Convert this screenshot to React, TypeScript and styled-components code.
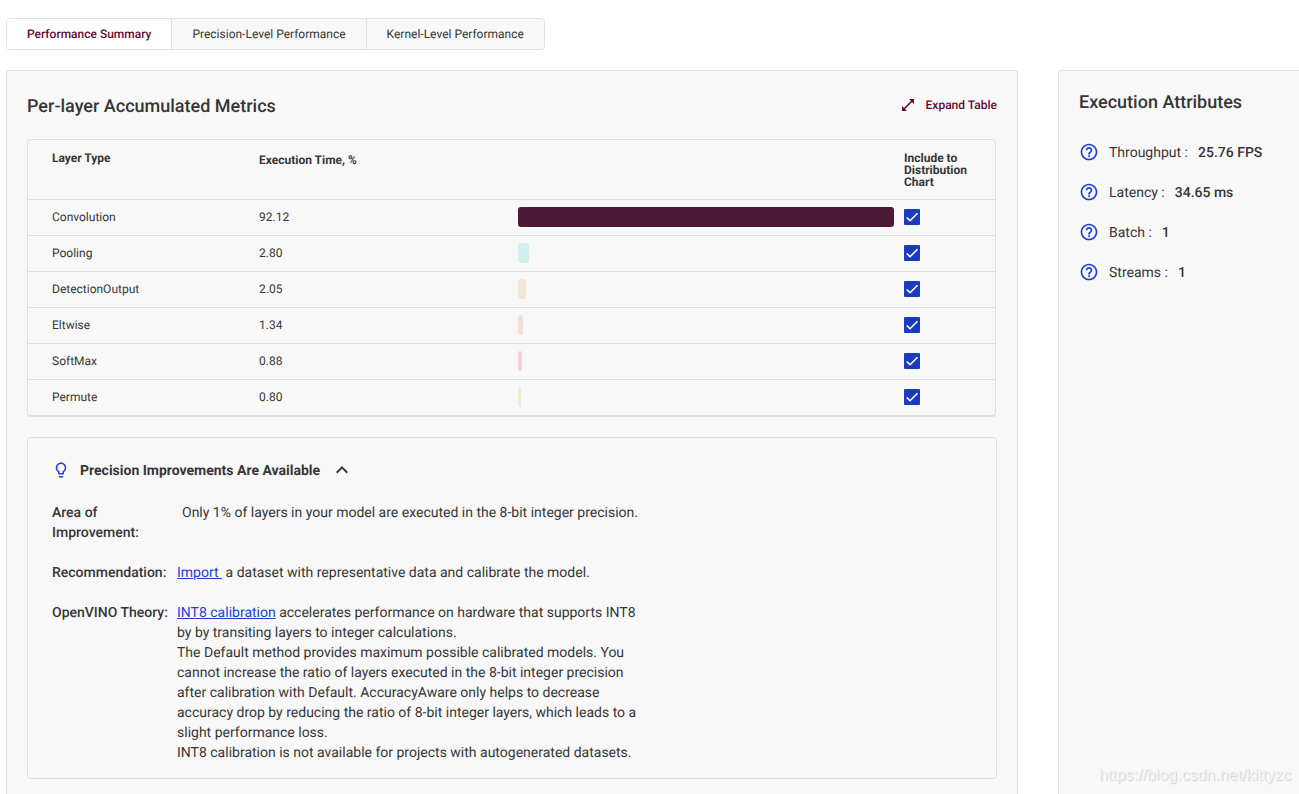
import React from "react";
import styled, { createGlobalStyle } from "styled-components";
import { MdExpandLess, MdHelpOutline, MdLightbulbOutline } from "react-icons/md";

const BORDER = "#e0e0e0";
const SURFACE = "#f8f8f8";
const TEXT = "#363636";
const WINE = "#650933";
const BLUE = "#1a3bc1";
const BRIGHT_BLUE = "#1c3fd6";

const GlobalStyle = createGlobalStyle`
  *, *::before, *::after { box-sizing: border-box; }
  body {
    margin: 0;
    background: #fff;
    color: ${TEXT};
    font: 400 14px/20px Roboto, sans-serif;
    text-rendering: geometricPrecision;
  }
  button { font-family: inherit; text-rendering: inherit; cursor: pointer; }
`;

const Page = styled.div`
  display: flex;
  flex-direction: column;
  gap: 20px;
  min-height: 100vh;
  padding: 18px 0 0 6px;
`;

const Tabs = styled.nav`
  display: flex;
  align-self: flex-start;
  height: 32px;
  border: 1px solid ${BORDER};
  border-radius: 4px;
  overflow: hidden;
`;

const Tab = styled.button<{ $active?: boolean }>`
  padding: 0 20px;
  border: 0;
  background: ${(p) => (p.$active ? "#fff" : SURFACE)};
  color: ${(p) => (p.$active ? WINE : TEXT)};
  font-size: 12px;
  font-weight: ${(p) => (p.$active ? 500 : 400)};
  line-height: 20px;

  & + & { border-left: 1px solid ${BORDER}; }
`;

const Columns = styled.div`
  display: flex;
  flex: 1;
  gap: 40px;
`;

const MainPanel = styled.main`
  flex: 1;
  min-width: 0;
  padding: 20px 20px 14px;
  border: 1px solid ${BORDER};
  border-bottom: 0;
  border-radius: 4px 4px 0 0;
  background: ${SURFACE};
`;

const SidePanel = styled.aside`
  flex: 0 0 241px;
  padding: 20px;
  border: 1px solid ${BORDER};
  border-width: 1px 0 0 1px;
  border-radius: 4px 0 0 0;
  background: ${SURFACE};
`;

const PanelHeader = styled.header`
  display: flex;
  align-items: flex-end;
  justify-content: space-between;
  height: 28px;
  margin-bottom: 20px;
`;

const Heading = styled.h2`
  margin: 0;
  font-size: 18px;
  font-weight: 500;
  line-height: 24px;
`;

const ExpandButton = styled.button`
  display: flex;
  align-items: center;
  gap: 11px;
  padding: 0;
  border: 0;
  background: none;
  color: ${WINE};
  font-size: 12px;
  font-weight: 500;
  line-height: 28px;
`;

const MetricsTable = styled.table`
  width: calc(100% - 1px);
  table-layout: fixed;
  border: 1px solid ${BORDER};
  border-bottom-width: 2px;
  border-radius: 4px;
  border-spacing: 0;
  font-size: 12px;
  line-height: 12px;
`;

const Column = styled.col<{ $width?: number }>`
  width: ${(p) => (p.$width ? `${p.$width}px` : "auto")};
`;

const HeadCell = styled.th<{ $low?: boolean }>`
  height: 59px;
  padding: ${(p) => (p.$low ? 14 : 12)}px 0 0;
  font-weight: 700;
  text-align: left;
  vertical-align: top;

  &:first-child { padding-left: 24px; }
`;

const Cell = styled.td`
  height: 36px;
  padding: 0 0 1px;
  border-top: 1px solid ${BORDER};
  vertical-align: middle;

  &:first-child { padding-left: 24px; }
`;

const BarTrack = styled.div`
  margin-right: 10px;
`;

const Bar = styled.div<{ $color: string }>`
  height: 20px;
  border-radius: 3px;
  background: ${(p) => p.$color};
`;

const CheckLabel = styled.label`
  display: grid;
  width: 16px;
  height: 16px;

  & > * { grid-area: 1 / 1; }
`;

const CheckInput = styled.input`
  appearance: none;
  width: 16px;
  height: 16px;
  margin: 0;
  border: 2px solid ${BLUE};
  border-radius: 1px;

  &:checked { background: ${BLUE}; }
  &:not(:checked) + svg { visibility: hidden; }
`;

const CheckMark = styled.svg`
  width: 16px;
  height: 16px;
  pointer-events: none;
`;

const AdviceCard = styled.section`
  margin-top: 20px;
  padding: 20px 24px 15px;
  border: 1px solid ${BORDER};
  border-radius: 4px;
`;

const AdviceToggle = styled.button`
  display: flex;
  align-items: center;
  height: 24px;
  margin-bottom: 21px;
  padding: 0;
  border: 0;
  background: none;
  color: ${TEXT};
  font-size: 14px;
  font-weight: 700;
  line-height: 20px;

  svg:first-child { margin-right: 10px; color: ${BRIGHT_BLUE}; }
  svg:last-child { margin-left: 10px; }
`;

const AdviceTitle = styled.span`
  padding-top: 2px;
`;

const AdviceList = styled.dl`
  display: flex;
  flex-direction: column;
  gap: 20px;
  margin: 0;
`;

const AdviceItem = styled.div`
  display: flex;
`;

const AdviceTerm = styled.dt<{ $wide?: boolean }>`
  flex: 0 0 ${(p) => (p.$wide ? 130 : 125)}px;
  font-weight: 500;
`;

const AdviceText = styled.dd`
  max-width: 464px;
  margin: 0;

  p { margin: 0; }
`;

const Link = styled.a`
  color: ${BRIGHT_BLUE};
  text-decoration: underline;
`;

const AttributeList = styled.dl`
  display: flex;
  flex-direction: column;
  gap: 20px;
  margin: 27px 0 0;
`;

const Attribute = styled.div`
  display: flex;
  gap: 10px;
  height: 20px;
  line-height: 22px;

  svg { color: ${BRIGHT_BLUE}; }
`;

const AttributeName = styled.dt``;

const AttributeValue = styled.dd`
  margin: 0;
  font-weight: 500;
`;

const Watermark = styled.span`
  position: fixed;
  right: 8px;
  bottom: 8px;
  color: #f1f1f1;
  font: 16px/20px "Liberation Sans", sans-serif;
  text-shadow: 1px 1px 1px #d2d2d2;
`;

const layers = [
  { type: "Convolution", time: 92.12, color: "#4d1a35" },
  { type: "Pooling", time: 2.8, color: "#d3efef" },
  { type: "DetectionOutput", time: 2.05, color: "#f1e7d3" },
  { type: "Eltwise", time: 1.34, color: "#f2e0d5" },
  { type: "SoftMax", time: 0.88, color: "#f0d5de" },
  { type: "Permute", time: 0.8, color: "#f2ebd3" },
];

const longest = Math.max(...layers.map((layer) => layer.time));

const attributes = [
  { name: "Throughput", value: "25.76 FPS" },
  { name: "Latency", value: "34.65 ms" },
  { name: "Batch", value: "1" },
  { name: "Streams", value: "1" },
];

function ExpandIcon() {
  return (
    <svg width="14" height="14" viewBox="0 0 14 14" aria-hidden="true">
      <path d="M8 1h5v5zM1 8v5h5z" fill="currentColor" />
      <path d="M3 11 11 3" stroke="currentColor" strokeWidth="1.6" />
    </svg>
  );
}

export default function App() {
  return (
    <>
      <GlobalStyle />
      <Page>
        <Tabs>
          <Tab $active>Performance Summary</Tab>
          <Tab>Precision-Level Performance</Tab>
          <Tab>Kernel-Level Performance</Tab>
        </Tabs>
        <Columns>
          <MainPanel>
            <PanelHeader>
              <Heading>Per-layer Accumulated Metrics</Heading>
              <ExpandButton>
                <ExpandIcon />
                Expand Table
              </ExpandButton>
            </PanelHeader>
            <MetricsTable>
              <colgroup>
                <Column $width={231} />
                <Column $width={259} />
                <Column />
                <Column $width={91} />
              </colgroup>
              <thead>
                <tr>
                  <HeadCell>Layer Type</HeadCell>
                  <HeadCell $low colSpan={2}>Execution Time, %</HeadCell>
                  <HeadCell>
                    Include to
                    <br />
                    Distribution
                    <br />
                    Chart
                  </HeadCell>
                </tr>
              </thead>
              <tbody>
                {layers.map((layer) => (
                  <tr key={layer.type}>
                    <Cell>{layer.type}</Cell>
                    <Cell>{layer.time.toFixed(2)}</Cell>
                    <Cell>
                      <BarTrack>
                        <Bar $color={layer.color} style={{ width: `${(layer.time / longest) * 100}%` }} />
                      </BarTrack>
                    </Cell>
                    <Cell>
                      <CheckLabel>
                        <CheckInput type="checkbox" defaultChecked aria-label={`Include ${layer.type}`} />
                        <CheckMark viewBox="0 0 24 24" aria-hidden="true">
                          <path d="M4.1 12.7 9 17.6 20.3 6.3" fill="none" stroke="#fff" strokeWidth="2.4" />
                        </CheckMark>
                      </CheckLabel>
                    </Cell>
                  </tr>
                ))}
              </tbody>
            </MetricsTable>
            <AdviceCard>
              <AdviceToggle aria-expanded="true">
                <MdLightbulbOutline size={18} />
                <AdviceTitle>Precision Improvements Are Available</AdviceTitle>
                <MdExpandLess size={24} />
              </AdviceToggle>
              <AdviceList>
                <AdviceItem>
                  <AdviceTerm $wide>
                    Area of
                    <br />
                    Improvement:
                  </AdviceTerm>
                  <AdviceText>Only 1% of layers in your model are executed in the 8-bit integer precision.</AdviceText>
                </AdviceItem>
                <AdviceItem>
                  <AdviceTerm>Recommendation:</AdviceTerm>
                  <AdviceText>
                    <Link href="#import">Import&nbsp;</Link> a dataset with representative data and calibrate the model.
                  </AdviceText>
                </AdviceItem>
                <AdviceItem>
                  <AdviceTerm>OpenVINO Theory:</AdviceTerm>
                  <AdviceText>
                    <p>
                      <Link href="#int8">INT8 calibration</Link> accelerates performance on hardware that supports INT8
                      by by transiting layers to integer calculations.
                    </p>
                    <p>
                      The Default method provides maximum possible calibrated models. You cannot increase the ratio of
                      layers executed in the 8-bit integer precision after calibration with Default. AccuracyAware only
                      helps to decrease accuracy drop by reducing the ratio of 8-bit integer layers, which leads to a
                      slight performance loss.
                    </p>
                    <p>INT8 calibration is not available for projects with autogenerated datasets.</p>
                  </AdviceText>
                </AdviceItem>
              </AdviceList>
            </AdviceCard>
          </MainPanel>
          <SidePanel>
            <Heading>Execution Attributes</Heading>
            <AttributeList>
              {attributes.map((attribute) => (
                <Attribute key={attribute.name}>
                  <MdHelpOutline size={20} />
                  <AttributeName>{attribute.name} :</AttributeName>
                  <AttributeValue>{attribute.value}</AttributeValue>
                </Attribute>
              ))}
            </AttributeList>
          </SidePanel>
        </Columns>
        <Watermark>https://blog.csdn.net/kittyzc</Watermark>
      </Page>
    </>
  );
}
